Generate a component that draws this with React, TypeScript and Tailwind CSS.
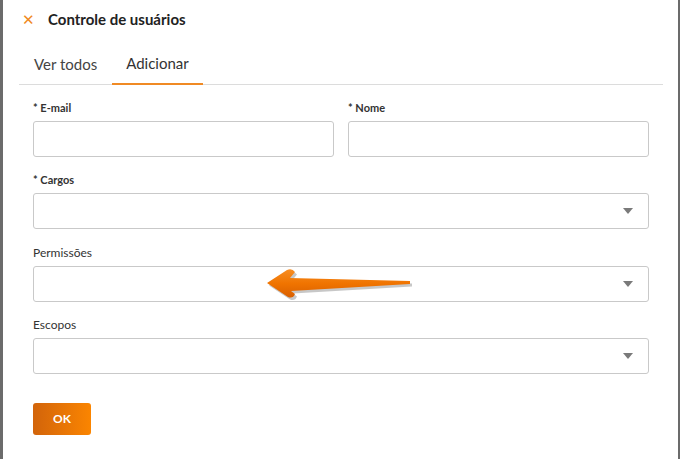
import React from 'react';

const font = { fontFamily: 'Lato, "Open Sans", sans-serif' };

function Caret() {
  return (
    <svg width="10" height="6" viewBox="0 0 10 6" className="shrink-0">
      <path d="M0 0 L10 0 L5 6 Z" fill="#7a7a7a" />
    </svg>
  );
}

function Field({ label, required }: { label: string; required?: boolean }) {
  return (
    <div className="flex flex-col">
      <label
        className={`h-4 leading-4 text-[#333] mb-[5px] ${required ? 'font-bold text-[11px]' : 'text-[12px]'}`}
      >
        {required ? '* ' : ''}
        {label}
      </label>
      <input className="h-9 w-full rounded-[3px] border border-[#c9c9c9] bg-white px-3 outline-none" />
    </div>
  );
}

function SelectField({
  label,
  required,
  className = '',
  children,
}: {
  label: string;
  required?: boolean;
  className?: string;
  children?: React.ReactNode;
}) {
  return (
    <div className={`flex flex-col ${className}`}>
      <label
        className={`h-4 leading-4 text-[#333] mb-[5px] ${required ? 'font-bold text-[11px]' : 'text-[12px]'}`}
      >
        {required ? '* ' : ''}
        {label}
      </label>
      <div className="relative h-9 w-full rounded-[3px] border border-[#c9c9c9] bg-white flex items-center justify-end pr-[15px]">
        <Caret />
        {children}
      </div>
    </div>
  );
}

// seta laranja apontando para o campo de permissões
function Arrow() {
  return (
    <svg width="150" height="34" viewBox="0 0 150 34" className="absolute left-[230px] top-[0px]">
      <defs>
        <linearGradient id="arrowFill" x1="0" y1="0" x2="0" y2="1">
          <stop offset="0" stopColor="#f78d22" />
          <stop offset="0.5" stopColor="#f07400" />
          <stop offset="1" stopColor="#d95f00" />
        </linearGradient>
      </defs>
      <path
        d="M4 17 L24 4 Q29 2 32 6 L27 12 L147 15 L147 18 L28 25 L32 28 Q30 33 25 31 Z"
        fill="#000"
        opacity="0.22"
        transform="translate(1 1.5)"
      />
      <path
        d="M3 16 L23 3 Q28 1 31 5 L26 11 L146 14 L146 17 L27 24 L31 27 Q29 32 24 30 Z"
        fill="url(#arrowFill)"
      />
    </svg>
  );
}

export default function App() {
  return (
    <div className="flex h-[459px] w-[680px] bg-white text-[#333]" style={font}>
      <div className="w-[3px] bg-[#6b6b6b]" />
      <div className="flex-1 flex flex-col">
        {/* Header */}
        <div className="h-[38px] flex items-center pl-[19px]">
          <span className="text-[#f08a24] text-[15px] leading-none w-[26px]">✕</span>
          <h1 className="text-[15px] font-bold text-[#222]">Controle de usuários</h1>
        </div>

        {/* Tabs */}
        <div className="mt-[6px] ml-4 mr-[15px] flex h-[41px] border-b border-[#dcdcdc]">
          <button className="px-[15px] text-[15px] text-[#444]">Ver todos</button>
          <button className="px-[14px] text-[15px] text-[#333] border-b-2 border-[#f08a24] -mb-px">
            Adicionar
          </button>
        </div>

        {/* Form */}
        <div className="px-[30px] pr-[29px] pt-[15px] flex flex-col gap-[15px]">
          <div className="grid grid-cols-2 gap-[14px]">
            <Field label="E-mail" required />
            <Field label="Nome" required />
          </div>
          <SelectField label="Cargos" required />
          <SelectField label="Permissões" className="mt-px">
            <Arrow />
          </SelectField>
          <SelectField label="Escopos" />
          <div className="pt-[14px]">
            <button className="h-8 w-[58px] rounded-[3px] bg-gradient-to-r from-[#d2640a] to-[#fb8500] text-white text-[12px] font-bold">
              OK
            </button>
          </div>
        </div>
      </div>
      <div className="w-[2px] bg-[#6b6b6b]" />
    </div>
  );
}
